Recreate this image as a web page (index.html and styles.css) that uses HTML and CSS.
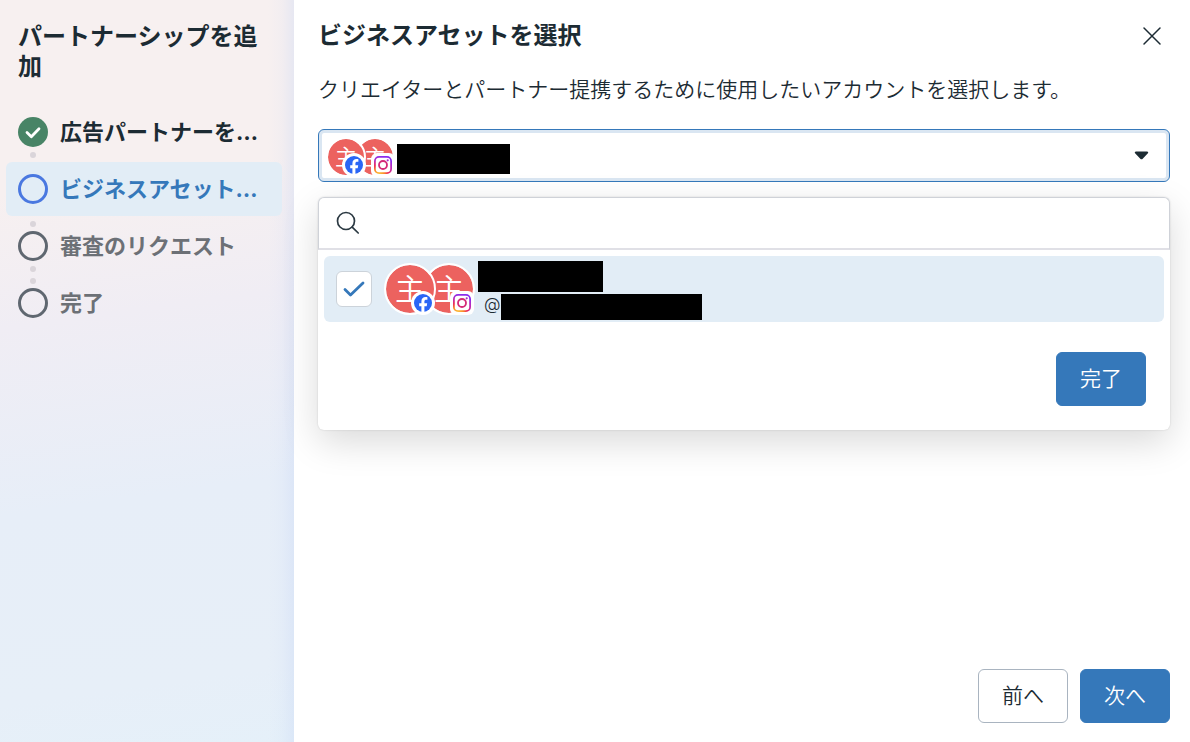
FILE: index.html
```html
<!DOCTYPE html>
<html lang="ja">
<head>
    <meta charset="UTF-8">
    <meta name="viewport" content="width=device-width, initial-scale=1.0">
    <title>パートナーシップを追加</title>
    <link rel="stylesheet" href="styles.css">
</head>
<body>
    <!-- shared icons -->
    <svg class="defs" aria-hidden="true">
        <defs>
            <radialGradient id="ig" cx="0.25" cy="1.05" r="1.1">
                <stop offset="0" stop-color="#fdc23c"/>
                <stop offset="0.3" stop-color="#fa8a2a"/>
                <stop offset="0.5" stop-color="#ee2f55"/>
                <stop offset="0.75" stop-color="#c32bb0"/>
                <stop offset="1" stop-color="#8a2cf0"/>
            </radialGradient>
        </defs>
        <symbol id="facebook" viewBox="0 0 24 24">
            <circle cx="12" cy="12" r="12" fill="#fff"/>
            <circle cx="12" cy="12" r="9" fill="#2a66f6"/>
            <path fill="#fff" d="M10.4 21v-5.8H8.2v-3h2.2v-1.4c0-3.2 1.5-4.7 4.3-4.7.6 0 1.3.1 1.7.2v2.5h-1.1c-1.3 0-1.9.5-1.9 1.8v1.6h2.8l-.5 3h-2.3V21z"/>
        </symbol>
        <symbol id="instagram" viewBox="0 0 24 24">
            <rect width="24" height="24" rx="6" fill="#fff"/>
            <rect x="3.9" y="3.9" width="16.2" height="16.2" rx="4.2" fill="none" stroke="url(#ig)" stroke-width="1.8"/>
            <circle cx="12" cy="12" r="4" fill="none" stroke="#d42a78" stroke-width="1.8"/>
            <circle cx="16.7" cy="7.3" r="1.1" fill="#a92cc8"/>
        </symbol>
    </svg>

    <div class="dialog">
        <aside class="sidebar">
            <h1>パートナーシップを追加</h1>
            <ol class="steps">
                <li class="step done">
                    <svg class="step-icon" viewBox="0 0 30 30">
                        <circle cx="15" cy="15" r="15" fill="#488466"/>
                        <path d="M9 15.5l4.3 4.2 7.7-8" fill="none" stroke="#fff" stroke-width="2.8" stroke-linecap="round" stroke-linejoin="round"/>
                    </svg>
                    <span>広告パートナーを…</span>
                </li>
                <li class="step active" aria-current="step">
                    <svg class="step-icon" viewBox="0 0 30 30"><circle cx="15" cy="15" r="13.5"/></svg>
                    <span>ビジネスアセット…</span>
                </li>
                <li class="step">
                    <svg class="step-icon" viewBox="0 0 30 30"><circle cx="15" cy="15" r="13.5"/></svg>
                    <span>審査のリクエスト</span>
                </li>
                <li class="step last">
                    <svg class="step-icon" viewBox="0 0 30 30"><circle cx="15" cy="15" r="13.5"/></svg>
                    <span>完了</span>
                </li>
            </ol>
        </aside>

        <main class="content">
            <header class="content-header">
                <h2>ビジネスアセットを選択</h2>
                <button class="close" type="button" aria-label="閉じる">
                    <svg viewBox="0 0 20 20"><path d="M2 2l16 16M18 2L2 18"/></svg>
                </button>
            </header>
            <p class="description">クリエイターとパートナー提携するために使用したいアカウントを選択します。</p>

            <div class="picker">
                <button class="select" type="button" aria-haspopup="listbox" aria-expanded="true" aria-label="アカウント">
                    <span class="avatars small">
                        <span class="avatar">主<svg class="badge"><use href="#facebook"/></svg></span>
                        <span class="avatar">主<svg class="badge"><use href="#instagram"/></svg></span>
                    </span>
                    <span class="redacted selected-name"></span>
                    <svg class="caret" viewBox="0 0 14 9"><path d="M1.5.5h11c1.2 0 1.6 1.1.9 1.8L8.2 7.8c-.7.7-1.7.7-2.4 0L.6 2.3C-.1 1.6.3.5 1.5.5z"/></svg>
                </button>

                <div class="menu">
                    <label class="search">
                        <svg viewBox="0 0 24 24"><circle cx="10" cy="10" r="8.5"/><path d="M16.2 16.2l6 5.8"/></svg>
                        <input type="search" aria-label="検索">
                    </label>
                    <label class="option">
                        <span class="check">
                            <input type="checkbox" checked>
                            <svg viewBox="0 0 22 16"><path d="M2 8.5L7.5 14 20 2"/></svg>
                        </span>
                        <span class="avatars large">
                            <span class="avatar">主<svg class="badge"><use href="#facebook"/></svg></span>
                            <span class="avatar">主<svg class="badge"><use href="#instagram"/></svg></span>
                        </span>
                        <span class="option-text">
                            <span class="redacted option-name"></span>
                            <span class="handle">@<span class="redacted option-handle"></span></span>
                        </span>
                    </label>
                    <div class="menu-footer">
                        <button class="btn primary" type="button">完了</button>
                    </div>
                </div>
            </div>

            <footer class="content-footer">
                <button class="btn" type="button">前へ</button>
                <button class="btn primary" type="button">次へ</button>
            </footer>
        </main>
    </div>
</body>
</html>
```
FILE: styles.css
```css
* {
    box-sizing: border-box;
}
body {
    margin: 0;
    font-family: Inter, "Noto Sans CJK JP", sans-serif;
    font-weight: 350;
    color: #1c2b33;
    background-color: #fff;
}
button, input {
    font: inherit;
    color: inherit;
}
h1, h2 {
    margin: 0;
    font-size: 24px;
    line-height: 30px;
    font-weight: 700;
}
.defs {
    position: absolute;
    width: 0;
    height: 0;
}
.dialog {
    display: flex;
    min-height: 100vh;
}

/* sidebar */
.sidebar {
    flex: 0 0 294px;
    padding: 22px 12px 22px 6px;
    background:
        linear-gradient(to left, rgba(200, 215, 245, 0.35), rgba(200, 215, 245, 0.1) 12px, rgba(200, 215, 245, 0) 26px),
        linear-gradient(172deg, #f7f0f0 25%, #f0edf4 42%, #e7eef8 66%, #e7eff8 90%, #e5f0f9);
}
.sidebar h1 {
    padding: 0 12px;
}
.steps {
    display: flex;
    flex-direction: column;
    gap: 3px;
    margin: 23px 0 0;
    padding: 0;
    list-style: none;
}
.step {
    position: relative;
    display: flex;
    align-items: center;
    gap: 12px;
    height: 54px;
    padding: 0 12px;
    border-radius: 6px;
    font-size: 22px;
    line-height: 30px;
    font-weight: 700;
    white-space: nowrap;
    color: #6c7076;
}
.step-icon {
    flex: none;
    width: 30px;
    height: 30px;
    fill: none;
    stroke: #5f6770;
    stroke-width: 3;
}
.step.done {
    color: #1c2b33;
}
.step.done .step-icon {
    stroke: none;
}
.step.active {
    color: #3578ba;
    background-color: #e2edf6;
}
.step.active .step-icon {
    stroke: #4a78e0;
}
/* connector dots */
.step::before,
.step::after {
    position: absolute;
    left: 24px;
    width: 6px;
    height: 6px;
    border-radius: 50%;
    background-color: #dad5da;
}
.step:not(.done):not(.active)::before {
    content: "";
    top: 2px;
}
.step:not(.last):not(.active)::after {
    content: "";
    bottom: 1px;
}

/* main column */
.content {
    flex: 1;
    display: flex;
    flex-direction: column;
    min-width: 0;
    padding: 18px 20px 19px 24px;
}
.content-header {
    display: flex;
    align-items: center;
    justify-content: space-between;
}
.close {
    display: flex;
    padding: 8px;
    border: none;
    background: none;
    cursor: pointer;
}
.close svg {
    width: 20px;
    height: 20px;
    fill: none;
    stroke: #1c2b33;
    stroke-width: 1.5;
    stroke-linecap: round;
}
.description {
    margin: 21px 0 24px;
    font-size: 21px;
    line-height: 30px;
}
.picker {
    position: relative;
}
.select {
    display: flex;
    align-items: center;
    width: 100%;
    height: 53px;
    padding: 0 20px 0 7px;
    border: 1px solid #3578ba;
    border-radius: 6px;
    background-color: #fff;
    box-shadow: inset 0 0 0 3px #dae6f2;
    text-align: left;
    cursor: pointer;
}
.caret {
    width: 15px;
    height: 9px;
    margin-left: auto;
    fill: #1c2b33;
}
.redacted {
    display: block;
    background-color: #000;
}
.selected-name {
    width: 113px;
    height: 30px;
    margin: 6px 0 0 2px;
}

/* avatars */
.avatars {
    display: flex;
    flex: none;
}
.avatar {
    position: relative;
    display: flex;
    align-items: center;
    justify-content: center;
    border: 2px solid #fff;
    border-radius: 50%;
    background-color: #ec625f;
    background-clip: padding-box;
    color: #fff;
}
.avatar:first-child {
    z-index: 1;
}
.avatar:last-child .badge {
    z-index: 2;
}
.badge {
    position: absolute;
    right: -1px;
    bottom: -2px;
    width: 24px;
    height: 24px;
}
.avatars.small {
    margin-top: 2px;
}
.small .avatar {
    width: 40px;
    height: 40px;
    font-size: 22px;
    line-height: 30px;
    margin-right: -11px;
}
.small .badge {
    right: -2px;
}
.large .avatar {
    width: 52px;
    height: 52px;
    font-size: 30px;
    line-height: 40px;
    margin-right: -13px;
}
.avatars .avatar:last-child {
    margin-right: 0;
}

/* drop-down */
.menu {
    position: absolute;
    top: 68px;
    left: 0;
    right: 0;
    border-radius: 6px;
    background-color: #fff;
    box-shadow: 0 0 2px rgba(0, 0, 0, 0.15), 0 12px 36px rgba(0, 0, 0, 0.15);
}
.search {
    display: flex;
    align-items: center;
    gap: 12px;
    height: 53px;
    padding: 0 17px;
    border: 1px solid #cfd2d8;
    border-bottom: 2px solid #e0e0e6;
    border-radius: 6px 6px 0 0;
}
.search svg {
    width: 24px;
    height: 24px;
    fill: none;
    stroke: #2b3942;
    stroke-width: 1.7;
    stroke-linecap: round;
}
.search input {
    flex: 1;
    min-width: 0;
    border: none;
    outline: none;
    background: none;
    font-size: 21px;
}
.option {
    display: flex;
    align-items: center;
    height: 66px;
    margin: 6px 6px 0;
    padding: 0 12px;
    border-radius: 6px;
    background-color: #e2edf6;
}
.check {
    display: grid;
    place-items: center;
    margin-right: 12px;
}
.check input,
.check svg {
    grid-area: 1 / 1;
}
.check input {
    width: 36px;
    height: 36px;
    margin: 0;
    border: 1px solid #ccd3da;
    border-radius: 6px;
    background-color: #fff;
    appearance: none;
}
.check svg {
    width: 22px;
    height: 16px;
    fill: none;
    stroke: #3578ba;
    stroke-width: 2.8;
    stroke-linecap: round;
    stroke-linejoin: round;
    pointer-events: none;
}
.option-text {
    display: flex;
    flex-direction: column;
    gap: 2px;
    margin: 2px 0 0 3px;
}
.option-name {
    width: 125px;
    height: 31px;
}
.handle {
    display: flex;
    padding-left: 6px;
    font-size: 17px;
    line-height: 20px;
}
.option-handle {
    width: 201px;
    height: 26px;
}
.menu-footer {
    display: flex;
    justify-content: flex-end;
    padding: 30px 24px 24px;
}

.btn {
    min-width: 90px;
    height: 54px;
    padding: 0 20px;
    border: 1px solid #a9b4c0;
    border-radius: 6px;
    background-color: #fff;
    font-size: 21px;
    line-height: 30px;
    cursor: pointer;
}
.btn.primary {
    border-color: #3578ba;
    background-color: #3578ba;
    color: #fff;
}
.content-footer {
    display: flex;
    justify-content: flex-end;
    gap: 12px;
    margin-top: auto;
}
```
